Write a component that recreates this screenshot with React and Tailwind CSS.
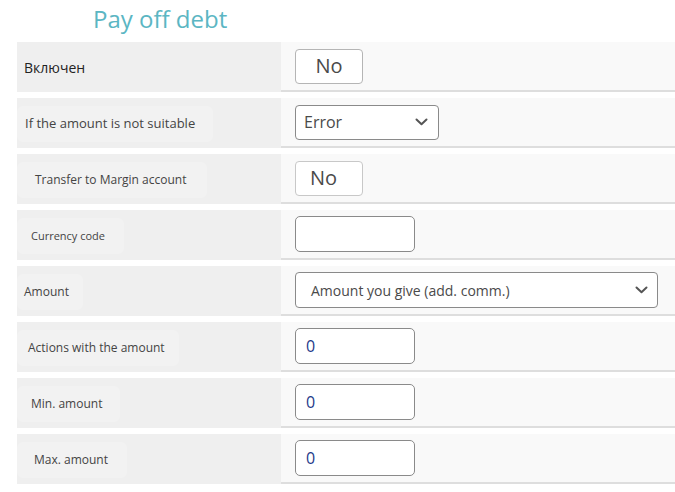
import React from "react";

const font = { fontFamily: '"Open Sans", "Noto Sans", sans-serif' };

function Chevron({ className = "" }) {
  return (
    <svg width="13" height="8" viewBox="0 0 13 8" className={className}>
      <path d="M1.5 1.5 L6.5 6.2 L11.5 1.5" fill="none" stroke="#555" strokeWidth="2" strokeLinecap="round" strokeLinejoin="round" />
    </svg>
  );
}

function Row({ label, labelClass, boxW, children, first }) {
  return (
    <div className="flex h-[50px] mb-[6px]">
      <div className="w-[264px] bg-[#efefef] flex items-center">
        {first ? (
          <span className={labelClass}>{label}</span>
        ) : (
          <div className={`h-[36px] mt-[2px] rounded-[6px] bg-[#f2f2f2] flex items-center ${boxW}`}>
            <span className={labelClass}>{label}</span>
          </div>
        )}
      </div>
      <div className="flex-1 bg-[#f9f9f9] border-b-2 border-[#dedede] flex items-center pl-[14px]">
        {children}
      </div>
    </div>
  );
}

function Toggle() {
  return (
    <div className="w-[68px] h-[35px] bg-white border border-[#b5b5b5] rounded-[4px] flex items-center justify-center text-[20px] text-[#4a4a4a]">
      No
    </div>
  );
}

function NumInput({ value }) {
  return (
    <div className="w-[120px] h-[36px] bg-white border border-[#8a8a8a] rounded-[5px] flex items-center pl-[10px] text-[16px] text-[#1e3a8a]">
      {value}
    </div>
  );
}

export default function App() {
  return (
    <div className="w-[675px] h-[492px] bg-white" style={font}>
      <div className="h-[42px] pl-[93px] text-[24px] leading-[38px] text-[#5bb6c3]">Pay off debt</div>
      <div className="pl-[17px]">
        <Row first label="Включен" labelClass="pl-[7px] text-[14px] text-[#222]">
          <Toggle />
        </Row>
        <Row label="If the amount is not suitable" boxW="w-[196px]" labelClass="pl-[8px] text-[13px] text-[#444]">
          <div className="w-[144px] h-[35px] bg-white border border-[#8a8a8a] rounded-[4px] flex items-center justify-between pl-[8px] pr-[10px] text-[16px] text-[#4a4a4a]">
            <span>Error</span>
            <Chevron />
          </div>
        </Row>
        <Row label="Transfer to Margin account" boxW="w-[190px]" labelClass="pl-[18px] text-[12px] text-[#444]">
          <div className="w-[68px] h-[35px] bg-white border border-[#c8c8c8] rounded-[4px] flex items-center pl-[14px] text-[20px] text-[#4a4a4a]">
            No
          </div>
        </Row>
        <Row label="Currency code" boxW="w-[107px]" labelClass="pl-[14px] text-[11px] text-[#444]">
          <NumInput value="" />
        </Row>
        <Row label="Amount" boxW="w-[66px]" labelClass="pl-[7px] text-[12px] text-[#444]">
          <div className="w-[363px] h-[36px] bg-white border border-[#8a8a8a] rounded-[4px] flex items-center justify-between pl-[15px] pr-[9px] text-[14px] text-[#4a4a4a]">
            <span>Amount you give (add. comm.)</span>
            <Chevron />
          </div>
        </Row>
        <Row label="Actions with the amount" boxW="w-[162px]" labelClass="pl-[11px] text-[12px] text-[#444]">
          <NumInput value="0" />
        </Row>
        <Row label="Min. amount" boxW="w-[103px]" labelClass="pl-[14px] text-[12px] text-[#444]">
          <NumInput value="0" />
        </Row>
        <Row label="Max. amount" boxW="w-[110px]" labelClass="pl-[17px] text-[12px] text-[#444]">
          <NumInput value="0" />
        </Row>
      </div>
    </div>
  );
}
